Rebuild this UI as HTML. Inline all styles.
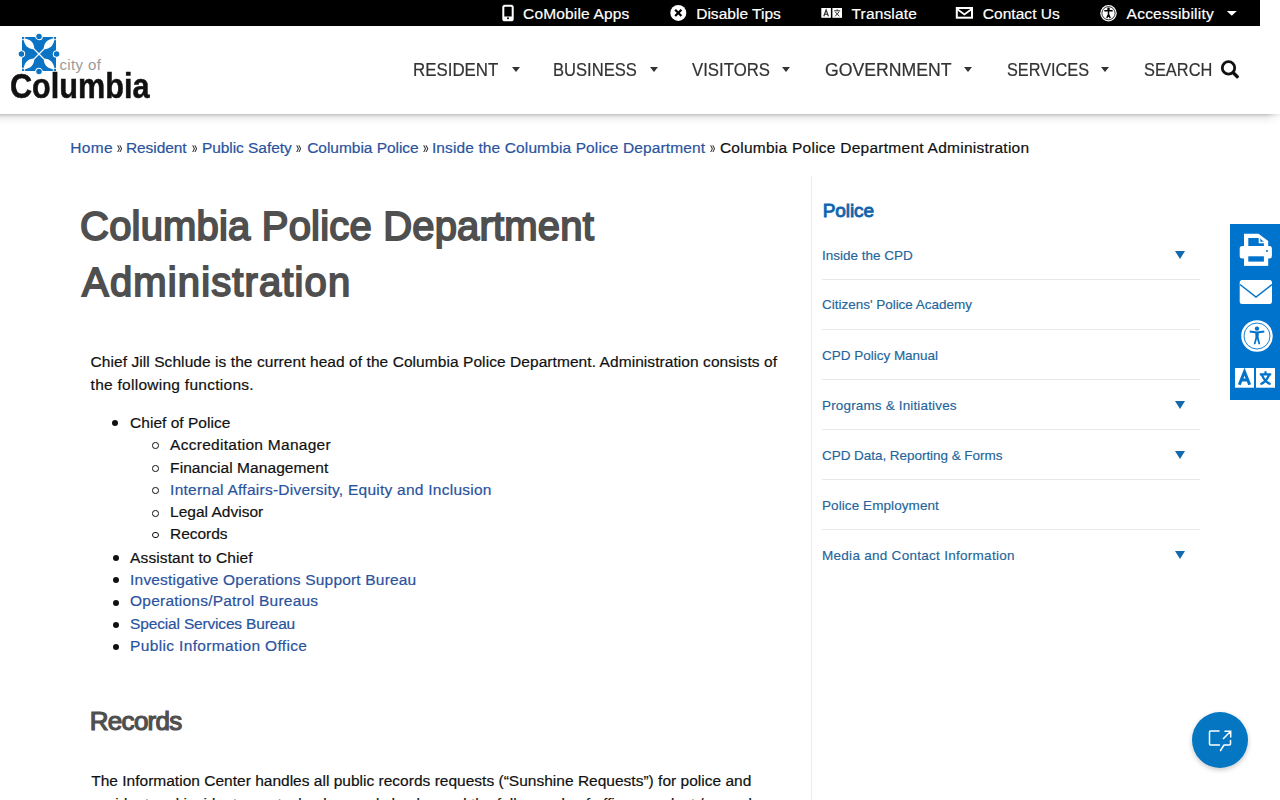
<!DOCTYPE html>
<html><head><meta charset="utf-8">
<style>
*{box-sizing:border-box;margin:0;padding:0}
html,body{width:1280px;height:800px;overflow:hidden;background:#fff;font-family:"Liberation Sans",sans-serif;color:#111}
.t{position:absolute;white-space:nowrap}
.bm{display:inline-block;width:0;height:0}
#topbar{position:absolute;left:0;top:0;width:1260px;height:26px;background:#000}
#shadow{position:absolute;left:0;top:114px;width:1280px;height:13px;-webkit-mask-image:linear-gradient(to right,#000 0,#000 1266px,rgba(0,0,0,.2) 1280px);background:linear-gradient(to bottom,rgba(0,0,0,.25) 0,rgba(0,0,0,.13) 2px,rgba(0,0,0,.06) 4px,rgba(0,0,0,.025) 7px,rgba(0,0,0,0) 13px)}
.caret{position:absolute;width:0;height:0;border-left:4px solid transparent;border-right:4px solid transparent;border-top:5px solid #333}
#vline{position:absolute;left:811px;top:176px;width:1px;height:624px;background:#ececec}
.sep{position:absolute;left:822px;width:378px;height:1px;background:#e8e8e8}
.tri{position:absolute;left:1175px;width:0;height:0;border-left:5.75px solid transparent;border-right:5.75px solid transparent;border-top:8px solid #146aae}
.dot{position:absolute;width:6px;height:6px;border-radius:50%;background:#111}
.circ{position:absolute;width:6.6px;height:6.6px;border-radius:50%;border:1.5px solid #111}
#tool{position:absolute;left:1230px;top:224px;width:50px;height:176px;background:#0073cd}
#chat{position:absolute;left:1192px;top:711.5px;width:56px;height:56px;border-radius:50%;background:#0577c2;box-shadow:0 2px 5px rgba(0,0,0,.22)}
svg{position:absolute;overflow:visible}
</style></head><body>
<div id="topbar"></div>
<div id="shadow"></div>

<!-- top bar icons -->
<svg style="left:0;top:0" width="1280" height="26">
  <!-- phone -->
  <rect x="503.3" y="5.7" width="9.4" height="14.6" rx="1.6" fill="none" stroke="#fff" stroke-width="2"/>
  <rect x="503.3" y="16.5" width="9.4" height="3.8" fill="#fff"/>
  <circle cx="508" cy="18.3" r="1" fill="#000"/>
  <!-- x circle -->
  <circle cx="678.3" cy="12.9" r="8" fill="#fff"/>
  <path d="M675.2 9.8 L681.4 16 M681.4 9.8 L675.2 16" stroke="#000" stroke-width="2.2"/>
  <!-- translate -->
  <rect x="821.3" y="8" width="9.6" height="9.8" fill="#fff"/>
  <rect x="832.4" y="8" width="9.6" height="9.8" fill="#fff"/>
  <path d="M823.8 16.3 L826.1 9.8 L828.4 16.3 M824.6 14.2 H827.6" stroke="#222" stroke-width="1.1" fill="none"/>
  <path d="M834.2 10.8 H840.2 M837.2 9.3 V10.8 M835.2 11.8 L839.3 16.3 M839.2 11.8 L835.1 16.3" stroke="#333" stroke-width="1" fill="none"/>
  <!-- envelope -->
  <rect x="956.8" y="8" width="15.2" height="9.7" fill="none" stroke="#fff" stroke-width="2"/>
  <path d="M957 9 L964.4 14.5 L971.8 9" fill="none" stroke="#fff" stroke-width="1.8"/>
  <!-- accessibility -->
  <circle cx="1108.5" cy="13.2" r="8.2" fill="#fff"/>
  <circle cx="1108.5" cy="13.2" r="6.6" fill="none" stroke="#000" stroke-width="0.8"/>
  <circle cx="1108.5" cy="8.9" r="1.3" fill="#000"/>
  <path d="M1104.3 10.8 L1112.7 10.8 M1108.5 10.8 V14.3 L1106.8 18 M1108.5 14.3 L1110.2 18" stroke="#000" stroke-width="1.5" fill="none"/>
  <path d="M1226.8 11.1 H1236.8 L1231.8 15.8 Z" fill="#fff"/>
</svg>

<!-- logo -->
<svg style="left:18px;top:31px" width="44" height="45" viewBox="0 0 44 45">
  <g transform="translate(21 23)">
    <rect x="-17" y="-17" width="34" height="34" fill="#0a73c3"/>
    <!-- white petals on diagonals -->
    <g fill="#fff">
      <path d="M-15.4 -15.4 C-8.5 -14.9 -4.9 -11.3 -4.6 -4.6 C-11.3 -4.9 -14.9 -8.5 -15.4 -15.4 Z"/>
      <path d="M15.4 -15.4 C8.5 -14.9 4.9 -11.3 4.6 -4.6 C11.3 -4.9 14.9 -8.5 15.4 -15.4 Z"/>
      <path d="M-15.4 15.4 C-8.5 14.9 -4.9 11.3 -4.6 4.6 C-11.3 4.9 -14.9 8.5 -15.4 15.4 Z"/>
      <path d="M15.4 15.4 C8.5 14.9 4.9 11.3 4.6 4.6 C11.3 4.9 14.9 8.5 15.4 15.4 Z"/>
    </g>
    <path d="M-5 -5 L5 5 M5 -5 L-5 5" stroke="#fff" stroke-width="1.2"/>
    <path d="M-17 -14.3 H-14.3 V-17 M17 -14.3 H14.3 V-17 M-17 14.3 H-14.3 V17 M17 14.3 H14.3 V17" stroke="#fff" stroke-width="0.9" fill="none"/>
    <g fill="#0a73c3" stroke="#fff" stroke-width="1.1">
      <circle cx="0" cy="-17.6" r="3.3"/>
      <circle cx="0" cy="17.6" r="3.3"/>
      <circle cx="-17.6" cy="0" r="3.3"/>
      <circle cx="17.6" cy="0" r="3.3"/>
    </g>
  </g>
</svg>

<!-- nav carets -->
<div class="caret" style="left:511.6px;top:67.3px"></div>
<div class="caret" style="left:649.6px;top:67.3px"></div>
<div class="caret" style="left:782.4px;top:67.3px"></div>
<div class="caret" style="left:964.3px;top:67.3px"></div>
<div class="caret" style="left:1101.4px;top:67.3px"></div>
<svg style="left:0;top:0" width="1280" height="100">
  <circle cx="1228.5" cy="67.9" r="6.2" fill="none" stroke="#111" stroke-width="2.8"/>
  <path d="M1233.3 72.8 L1237.3 76.7" stroke="#111" stroke-width="3.3" stroke-linecap="round"/>
</svg>

<!-- list bullets -->
<div class="dot" style="left:112.4px;top:420.3px"></div>
<div class="circ" style="left:152.3px;top:442.2px"></div>
<div class="circ" style="left:152.3px;top:465px"></div>
<div class="circ" style="left:152.3px;top:487.2px"></div>
<div class="circ" style="left:152.3px;top:510px"></div>
<div class="circ" style="left:152.3px;top:531.8px"></div>
<div class="dot" style="left:112.6px;top:554.8px"></div>
<div class="dot" style="left:112.6px;top:577.3px"></div>
<div class="dot" style="left:112.6px;top:599.8px"></div>
<div class="dot" style="left:112.6px;top:622.1px"></div>
<div class="dot" style="left:112.6px;top:644.2px"></div>

<div id="vline"></div>
<div class="sep" style="top:279px"></div>
<div class="sep" style="top:329px"></div>
<div class="sep" style="top:379px"></div>
<div class="sep" style="top:429px"></div>
<div class="sep" style="top:479px"></div>
<div class="sep" style="top:529px"></div>
<div class="tri" style="top:251px"></div>
<div class="tri" style="top:401px"></div>
<div class="tri" style="top:451px"></div>
<div class="tri" style="top:551px"></div>

<div class="t" id="t0" style="left:523.10px;top:5.50px;font-size:15.5px;line-height:15.5px;font-weight:normal;color:#fff;letter-spacing:0.162px;-webkit-text-stroke:0.2px currentColor;">CoMobile Apps<i class="bm"></i></div>
<div class="t" id="t1" style="left:696.20px;top:5.50px;font-size:15.5px;line-height:15.5px;font-weight:normal;color:#fff;letter-spacing:0.022px;-webkit-text-stroke:0.2px currentColor;">Disable Tips<i class="bm"></i></div>
<div class="t" id="t2" style="left:851.50px;top:5.50px;font-size:15.5px;line-height:15.5px;font-weight:normal;color:#fff;letter-spacing:0.161px;-webkit-text-stroke:0.2px currentColor;">Translate<i class="bm"></i></div>
<div class="t" id="t3" style="left:982.80px;top:5.50px;font-size:15.5px;line-height:15.5px;font-weight:normal;color:#fff;letter-spacing:0.043px;-webkit-text-stroke:0.2px currentColor;">Contact Us<i class="bm"></i></div>
<div class="t" id="t4" style="left:1126.60px;top:5.50px;font-size:15.5px;line-height:15.5px;font-weight:normal;color:#fff;letter-spacing:0.228px;-webkit-text-stroke:0.2px currentColor;">Accessibility<i class="bm"></i></div>
<div class="t" id="t5" style="left:413.16px;top:61.00px;font-size:18px;line-height:18px;font-weight:normal;color:#333;letter-spacing:0.000px;transform:scaleX(0.9376);transform-origin:0 0;-webkit-text-stroke:0.2px #333;">RESIDENT<i class="bm"></i></div>
<div class="t" id="t6" style="left:553.38px;top:61.00px;font-size:18px;line-height:18px;font-weight:normal;color:#333;letter-spacing:0.000px;transform:scaleX(0.9209);transform-origin:0 0;-webkit-text-stroke:0.2px #333;">BUSINESS<i class="bm"></i></div>
<div class="t" id="t7" style="left:692.20px;top:61.00px;font-size:18px;line-height:18px;font-weight:normal;color:#333;letter-spacing:0.000px;transform:scaleX(0.9321);transform-origin:0 0;-webkit-text-stroke:0.2px #333;">VISITORS<i class="bm"></i></div>
<div class="t" id="t8" style="left:825.30px;top:61.00px;font-size:18px;line-height:18px;font-weight:normal;color:#333;letter-spacing:0.000px;transform:scaleX(0.9813);transform-origin:0 0;-webkit-text-stroke:0.2px #333;">GOVERNMENT<i class="bm"></i></div>
<div class="t" id="t9" style="left:1006.80px;top:61.00px;font-size:18px;line-height:18px;font-weight:normal;color:#333;letter-spacing:0.000px;transform:scaleX(0.9041);transform-origin:0 0;-webkit-text-stroke:0.2px #333;">SERVICES<i class="bm"></i></div>
<div class="t" id="t10" style="left:1143.90px;top:61.00px;font-size:18px;line-height:18px;font-weight:normal;color:#333;letter-spacing:0.000px;transform:scaleX(0.9106);transform-origin:0 0;-webkit-text-stroke:0.2px #333;">SEARCH<i class="bm"></i></div>
<div class="t" id="t11" style="left:9.60px;top:69.20px;font-size:34.2px;line-height:34.2px;font-weight:bold;color:#111;letter-spacing:0.000px;transform:scaleX(0.8958);transform-origin:0 0;-webkit-text-stroke:0.5px #111;">Columbia<i class="bm"></i></div>
<div class="t" id="t12" style="left:59.50px;top:57.20px;font-size:15px;line-height:15px;font-weight:normal;color:#9a9a9a;letter-spacing:0.365px;">city of<i class="bm"></i></div>
<div class="t" id="t13" style="left:70.20px;top:139.55px;font-size:15.5px;line-height:15.5px;font-weight:normal;color:#2a539e;letter-spacing:0.325px;-webkit-text-stroke:0.2px currentColor;">Home<i class="bm"></i></div>
<div class="t" id="t14" style="left:116.60px;top:138.80px;font-size:17px;line-height:17px;font-weight:normal;color:#222;letter-spacing:0.000px;transform:scaleX(0.5667);transform-origin:0 0;-webkit-text-stroke:0.2px currentColor;">»<i class="bm"></i></div>
<div class="t" id="t15" style="left:125.90px;top:139.55px;font-size:15.5px;line-height:15.5px;font-weight:normal;color:#2a539e;letter-spacing:-0.067px;-webkit-text-stroke:0.2px currentColor;">Resident<i class="bm"></i></div>
<div class="t" id="t16" style="left:192.20px;top:138.80px;font-size:17px;line-height:17px;font-weight:normal;color:#222;letter-spacing:0.000px;transform:scaleX(0.5667);transform-origin:0 0;-webkit-text-stroke:0.2px currentColor;">»<i class="bm"></i></div>
<div class="t" id="t17" style="left:201.90px;top:139.55px;font-size:15.5px;line-height:15.5px;font-weight:normal;color:#2a539e;letter-spacing:-0.051px;-webkit-text-stroke:0.2px currentColor;">Public Safety<i class="bm"></i></div>
<div class="t" id="t18" style="left:296.20px;top:138.80px;font-size:17px;line-height:17px;font-weight:normal;color:#222;letter-spacing:0.000px;transform:scaleX(0.5667);transform-origin:0 0;-webkit-text-stroke:0.2px currentColor;">»<i class="bm"></i></div>
<div class="t" id="t19" style="left:307.20px;top:139.55px;font-size:15.5px;line-height:15.5px;font-weight:normal;color:#2a539e;letter-spacing:-0.034px;-webkit-text-stroke:0.2px currentColor;">Columbia Police<i class="bm"></i></div>
<div class="t" id="t20" style="left:423.00px;top:138.80px;font-size:17px;line-height:17px;font-weight:normal;color:#222;letter-spacing:0.000px;transform:scaleX(0.5889);transform-origin:0 0;-webkit-text-stroke:0.2px currentColor;">»<i class="bm"></i></div>
<div class="t" id="t21" style="left:431.90px;top:139.55px;font-size:15.5px;line-height:15.5px;font-weight:normal;color:#2a539e;letter-spacing:0.122px;-webkit-text-stroke:0.2px currentColor;">Inside the Columbia Police Department<i class="bm"></i></div>
<div class="t" id="t22" style="left:710.00px;top:138.80px;font-size:17px;line-height:17px;font-weight:normal;color:#222;letter-spacing:0.000px;transform:scaleX(0.5556);transform-origin:0 0;-webkit-text-stroke:0.2px currentColor;">»<i class="bm"></i></div>
<div class="t" id="t23" style="left:719.90px;top:139.55px;font-size:15.5px;line-height:15.5px;font-weight:normal;color:#111;letter-spacing:0.256px;-webkit-text-stroke:0.2px currentColor;">Columbia Police Department Administration<i class="bm"></i></div>
<div class="t" id="t24" style="left:80.10px;top:205.90px;font-size:40px;line-height:40px;font-weight:normal;color:#4f4f4f;letter-spacing:0.184px;-webkit-text-stroke:1.8px #4f4f4f;">Columbia Police Department<i class="bm"></i></div>
<div class="t" id="t25" style="left:82.10px;top:262.00px;font-size:40px;line-height:40px;font-weight:normal;color:#4f4f4f;letter-spacing:1.131px;-webkit-text-stroke:1.8px #4f4f4f;">Administration<i class="bm"></i></div>
<div class="t" id="t26" style="left:90.60px;top:353.65px;font-size:15.5px;line-height:15.5px;font-weight:normal;color:#111;letter-spacing:0.067px;-webkit-text-stroke:0.2px currentColor;">Chief Jill Schlude is the current head of the Columbia Police Department. Administration consists of<i class="bm"></i></div>
<div class="t" id="t27" style="left:90.60px;top:377.35px;font-size:15.5px;line-height:15.5px;font-weight:normal;color:#111;letter-spacing:0.269px;-webkit-text-stroke:0.2px currentColor;">the following functions.<i class="bm"></i></div>
<div class="t" id="t28" style="left:130.10px;top:414.55px;font-size:15.5px;line-height:15.5px;font-weight:normal;color:#111;letter-spacing:0.020px;-webkit-text-stroke:0.2px currentColor;">Chief of Police<i class="bm"></i></div>
<div class="t" id="t29" style="left:170.10px;top:437.05px;font-size:15.5px;line-height:15.5px;font-weight:normal;color:#111;letter-spacing:0.274px;-webkit-text-stroke:0.2px currentColor;">Accreditation Manager<i class="bm"></i></div>
<div class="t" id="t30" style="left:170.10px;top:459.55px;font-size:15.5px;line-height:15.5px;font-weight:normal;color:#111;letter-spacing:0.068px;-webkit-text-stroke:0.2px currentColor;">Financial Management<i class="bm"></i></div>
<div class="t" id="t31" style="left:170.10px;top:481.55px;font-size:15.5px;line-height:15.5px;font-weight:normal;color:#2a539e;letter-spacing:0.251px;-webkit-text-stroke:0.2px currentColor;">Internal Affairs-Diversity, Equity and Inclusion<i class="bm"></i></div>
<div class="t" id="t32" style="left:170.10px;top:504.25px;font-size:15.5px;line-height:15.5px;font-weight:normal;color:#111;letter-spacing:0.004px;-webkit-text-stroke:0.2px currentColor;">Legal Advisor<i class="bm"></i></div>
<div class="t" id="t33" style="left:170.10px;top:526.15px;font-size:15.5px;line-height:15.5px;font-weight:normal;color:#111;letter-spacing:-0.061px;-webkit-text-stroke:0.2px currentColor;">Records<i class="bm"></i></div>
<div class="t" id="t34" style="left:130.10px;top:549.75px;font-size:15.5px;line-height:15.5px;font-weight:normal;color:#111;letter-spacing:0.115px;-webkit-text-stroke:0.2px currentColor;">Assistant to Chief<i class="bm"></i></div>
<div class="t" id="t35" style="left:130.10px;top:571.75px;font-size:15.5px;line-height:15.5px;font-weight:normal;color:#2a539e;letter-spacing:0.183px;-webkit-text-stroke:0.2px currentColor;">Investigative Operations Support Bureau<i class="bm"></i></div>
<div class="t" id="t36" style="left:130.10px;top:593.00px;font-size:15.5px;line-height:15.5px;font-weight:normal;color:#2a539e;letter-spacing:0.223px;-webkit-text-stroke:0.2px currentColor;">Operations/Patrol Bureaus<i class="bm"></i></div>
<div class="t" id="t37" style="left:130.10px;top:616.25px;font-size:15.5px;line-height:15.5px;font-weight:normal;color:#2a539e;letter-spacing:-0.170px;-webkit-text-stroke:0.2px currentColor;">Special Services Bureau<i class="bm"></i></div>
<div class="t" id="t38" style="left:130.10px;top:638.00px;font-size:15.5px;line-height:15.5px;font-weight:normal;color:#2a539e;letter-spacing:0.346px;-webkit-text-stroke:0.2px currentColor;">Public Information Office<i class="bm"></i></div>
<div class="t" id="t39" style="left:89.80px;top:707.80px;font-size:26px;line-height:26px;font-weight:normal;color:#4f4f4f;letter-spacing:-0.719px;-webkit-text-stroke:1.2px #4f4f4f;">Records<i class="bm"></i></div>
<div class="t" id="t40" style="left:91.20px;top:773.35px;font-size:15.5px;line-height:15.5px;font-weight:normal;color:#111;letter-spacing:0.011px;-webkit-text-stroke:0.2px currentColor;">The Information Center handles all public records requests (“Sunshine Requests”) for police and<i class="bm"></i></div>
<div class="t" id="t41" style="left:91.20px;top:795.75px;font-size:15.5px;line-height:15.5px;font-weight:normal;color:#111;letter-spacing:0.011px;-webkit-text-stroke:0.2px currentColor;">accident and incident reports, background checks, and the full records of officer conduct / records<i class="bm"></i></div>
<div class="t" id="t42" style="left:822.65px;top:201.20px;font-size:19px;line-height:19px;font-weight:normal;color:#0f65ad;letter-spacing:-0.056px;-webkit-text-stroke:0.9px #0f65ad;">Police<i class="bm"></i></div>
<div class="t" id="t43" style="left:822.00px;top:248.55px;font-size:13.5px;line-height:13.5px;font-weight:normal;color:#23659b;letter-spacing:-0.004px;-webkit-text-stroke:0.15px #23659b;">Inside the CPD<i class="bm"></i></div>
<div class="t" id="t44" style="left:822.00px;top:298.15px;font-size:13.5px;line-height:13.5px;font-weight:normal;color:#23659b;letter-spacing:-0.017px;-webkit-text-stroke:0.15px #23659b;">Citizens&#x27; Police Academy<i class="bm"></i></div>
<div class="t" id="t45" style="left:822.00px;top:348.55px;font-size:13.5px;line-height:13.5px;font-weight:normal;color:#23659b;letter-spacing:-0.012px;-webkit-text-stroke:0.15px #23659b;">CPD Policy Manual<i class="bm"></i></div>
<div class="t" id="t46" style="left:822.00px;top:398.55px;font-size:13.5px;line-height:13.5px;font-weight:normal;color:#23659b;letter-spacing:0.155px;-webkit-text-stroke:0.15px #23659b;">Programs &amp; Initiatives<i class="bm"></i></div>
<div class="t" id="t47" style="left:822.00px;top:448.55px;font-size:13.5px;line-height:13.5px;font-weight:normal;color:#23659b;letter-spacing:-0.043px;-webkit-text-stroke:0.15px #23659b;">CPD Data, Reporting &amp; Forms<i class="bm"></i></div>
<div class="t" id="t48" style="left:822.00px;top:498.55px;font-size:13.5px;line-height:13.5px;font-weight:normal;color:#23659b;letter-spacing:0.081px;-webkit-text-stroke:0.15px #23659b;">Police Employment<i class="bm"></i></div>
<div class="t" id="t49" style="left:822.00px;top:548.55px;font-size:13.5px;line-height:13.5px;font-weight:normal;color:#23659b;letter-spacing:0.282px;-webkit-text-stroke:0.15px #23659b;">Media and Contact Information<i class="bm"></i></div>

<div id="tool"></div>
<svg style="left:1230px;top:224px" width="50" height="176">
  <!-- printer -->
  <path d="M14 9.7 H28.5 L38.2 17 V24 H14 Z" fill="#fff"/>
  <path d="M18.3 14 H29.7 L33.9 18 V23 H18.3 Z" fill="#0073cd"/>
  <path d="M29.5 14 V18.5 H33.9" fill="none" stroke="#fff" stroke-width="1.6"/>
  <rect x="9.7" y="22" width="32.2" height="12.4" rx="2.5" fill="#fff"/>
  <rect x="14" y="30" width="24.2" height="11.9" fill="#fff"/>
  <rect x="18.3" y="32.3" width="15.6" height="5.3" fill="#0073cd"/>
  <circle cx="37" cy="27" r="1" fill="#0073cd"/>
  <!-- envelope -->
  <rect x="9.7" y="56" width="32.3" height="24.1" rx="2.5" fill="#fff"/>
  <path d="M10 60.5 L26 73 L42 60.5" fill="none" stroke="#0073cd" stroke-width="1.4"/>
  <!-- accessibility -->
  <circle cx="27" cy="112" r="15.8" fill="#fff"/>
  <circle cx="27" cy="112" r="13" fill="none" stroke="#0073cd" stroke-width="0.9"/>
  <circle cx="27" cy="104.6" r="2.2" fill="#0073cd"/>
  <path d="M19.7 107.6 Q27 109.2 34.3 107.6" fill="none" stroke="#0073cd" stroke-width="2"/>
  <path d="M25.3 108.5 H28.7 L28.6 113.5 L30.3 120.3 H28.6 L27 114.8 L25.4 120.3 H23.7 L25.4 113.5 Z" fill="#0073cd"/>
  <!-- translate -->
  <rect x="5" y="144" width="19" height="19.7" fill="#fff"/>
  <rect x="26" y="144" width="19" height="19.7" fill="#fff"/>
  <path d="M9.3 160.8 L14.5 147.8 L19.7 160.8 M11.4 156 H17.6" fill="none" stroke="#0073cd" stroke-width="3"/>
  <path d="M29.8 150.3 H41.2 M35.5 147.3 V150.3 M32 151.3 Q35 158 40.5 160.3 M39 151.3 Q36 158 30.5 160.3" fill="none" stroke="#0073cd" stroke-width="2.2"/>
</svg>

<div id="chat"></div>
<svg style="left:1192px;top:711.5px" width="56" height="56">
  <path d="M27 19 H18.5 Q17.5 19 17.5 20 V32 Q17.5 33 18.5 33 H27.5" fill="none" stroke="#fff" stroke-width="1.5" stroke-linecap="round"/>
  <path d="M28.5 38.5 L32 33 H37.5 Q38.5 33 38.5 32 V28.5" fill="none" stroke="#fff" stroke-width="1.5" stroke-linecap="round" stroke-linejoin="round"/>
  <path d="M31.5 26.5 L38.2 19.8 M33 19.3 H38.7 V25" fill="none" stroke="#fff" stroke-width="1.5" stroke-linecap="round"/>
</svg>
</body></html>
